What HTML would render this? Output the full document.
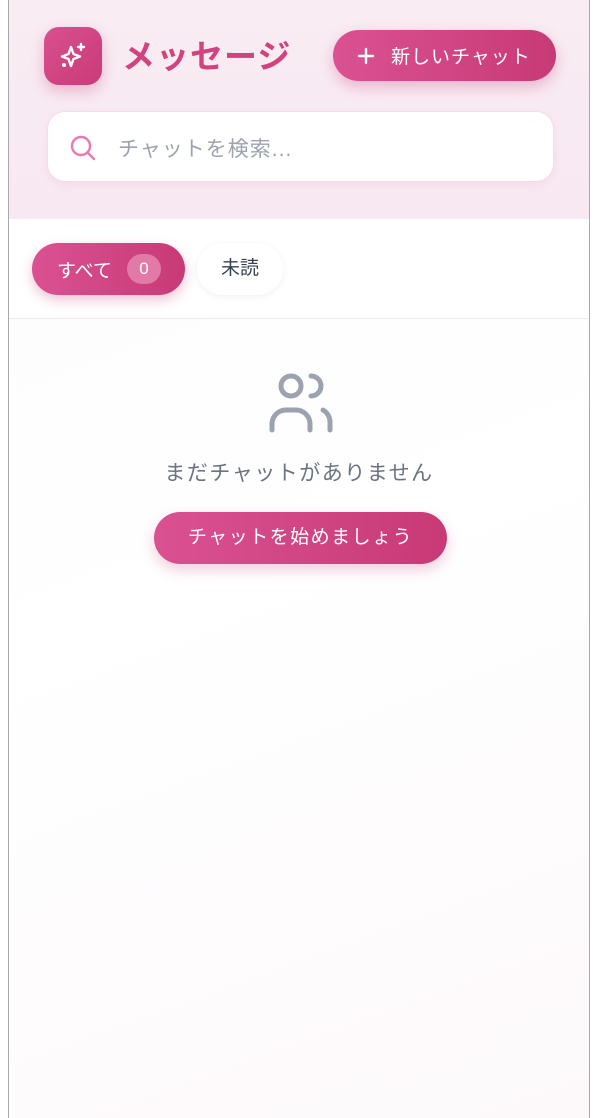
<!DOCTYPE html>
<html><head><meta charset="utf-8"><style>
*{box-sizing:border-box;margin:0;padding:0}
body{width:606px;height:1118px;background:#fff;font-family:"Liberation Sans","Noto Sans CJK JP",sans-serif;position:relative;overflow:hidden}
.frame{position:absolute;left:8px;top:0;width:582px;height:1118px;border-left:1px solid #a8a8a8;border-right:1px solid #a8a8a8;background:linear-gradient(160deg,#fbfbfc 0%,#fff 50%,#fdf9fb 100%)}
.header{position:absolute;left:0;top:0;width:580px;height:219px;background:linear-gradient(180deg,#f9ecf3,#f8e8f1)}
.logo{position:absolute;left:35px;top:27px;width:58px;height:58px;border-radius:15px;background:linear-gradient(135deg,#d9508f,#c93a78);box-shadow:0 6px 14px rgba(200,60,120,.3)}
.title{position:absolute;left:113px;top:30px;font-size:33px;font-weight:bold;color:#d0437f;letter-spacing:1px}
.newbtn{position:absolute;left:324px;top:30px;width:223px;height:51px;border-radius:26px;background:linear-gradient(90deg,#da5192,#c83a76);color:#fff;font-size:19px;display:flex;align-items:center;padding-left:24px;box-shadow:0 6px 14px rgba(200,60,120,.3);letter-spacing:1px}
.search{position:absolute;left:38px;top:111px;width:507px;height:71px;border-radius:18px;background:#fff;border:1px solid #f6dbe8;box-shadow:0 3px 8px rgba(220,120,170,.12)}
.search span{position:absolute;left:70px;top:21px;font-size:21px;color:#9ca3af;letter-spacing:1px}
.tabs{position:absolute;left:0;top:219px;width:580px;height:100px;background:#fff;border-bottom:1px solid #f6e6ee}
.t1{position:absolute;left:23px;top:24px;width:153px;height:52px;border-radius:26px;background:linear-gradient(90deg,#da5192,#c83a76);color:#fff;font-size:19px;box-shadow:0 5px 12px rgba(200,60,120,.3)}
.t1 .l{position:absolute;left:25px;top:13px}
.badge{position:absolute;left:95px;top:11px;width:34px;height:30px;border-radius:15px;background:#e27aa8;text-align:center;line-height:30px;font-size:17px}
.t2{position:absolute;left:188px;top:24px;width:86px;height:52px;border-radius:26px;background:#fff;box-shadow:0 2px 8px rgba(0,0,0,.06);font-size:19px;color:#374151;text-align:center;line-height:52px}
.empty{position:absolute;left:0;top:457px;width:580px;text-align:center;font-size:21px;color:#6b7280;letter-spacing:1.5px}
.start{position:absolute;left:145px;top:512px;width:293px;height:52px;border-radius:26px;background:linear-gradient(90deg,#da5192,#c83a76);color:#fff;font-size:19px;text-align:center;line-height:52px;letter-spacing:1.5px;box-shadow:0 6px 14px rgba(200,60,120,.25)}
</style></head><body>
<div class="frame">
<div class="header">
<div class="logo"><svg width="58" height="58" viewBox="0 0 58 58" fill="none" stroke="#fff" stroke-width="2.4" stroke-linecap="round" stroke-linejoin="round"><path d="M27 20 L29.5 27 L36 29.5 L29.5 32 L27 39 L24.5 32 L18 29.5 L24.5 27 Z"/><path d="M37 17v6M34 20h6"/><circle cx="20" cy="38" r="0.8" fill="#fff"/></svg></div>
<div class="title">メッセージ</div>
<div class="newbtn"><svg width="18" height="18" viewBox="0 0 18 18" stroke="#fff" stroke-width="2.4" stroke-linecap="round"><path d="M9 2v14M2 9h14"/></svg><span style="margin-left:16px">新しいチャット</span></div>
<div class="search"><svg style="position:absolute;left:21px;top:22px" width="28" height="28" viewBox="0 0 28 28" fill="none" stroke="#e879b2" stroke-width="2.4" stroke-linecap="round"><circle cx="12" cy="12" r="9"/><path d="M19 19l6 6"/></svg><span>チャットを検索...</span></div>
</div>
<div class="tabs">
<div class="t1"><span class="l">すべて</span><div class="badge">0</div></div>
<div class="t2">未読</div>
</div>
<svg style="position:absolute;left:258px;top:370px" width="68" height="64" viewBox="0 0 68 64" fill="none" stroke="#9ca3af" stroke-width="5" stroke-linecap="round"><circle cx="24" cy="16" r="10"/><path d="M5 60v-6a14 14 0 0 1 14-14h10a14 14 0 0 1 14 14v6"/><path d="M44 6a10 10 0 0 1 0 20"/><path d="M56 40a14 14 0 0 1 7 12v8"/></svg>
<div class="empty">まだチャットがありません</div>
<div class="start">チャットを始めましょう</div>
</div>
</body></html>
